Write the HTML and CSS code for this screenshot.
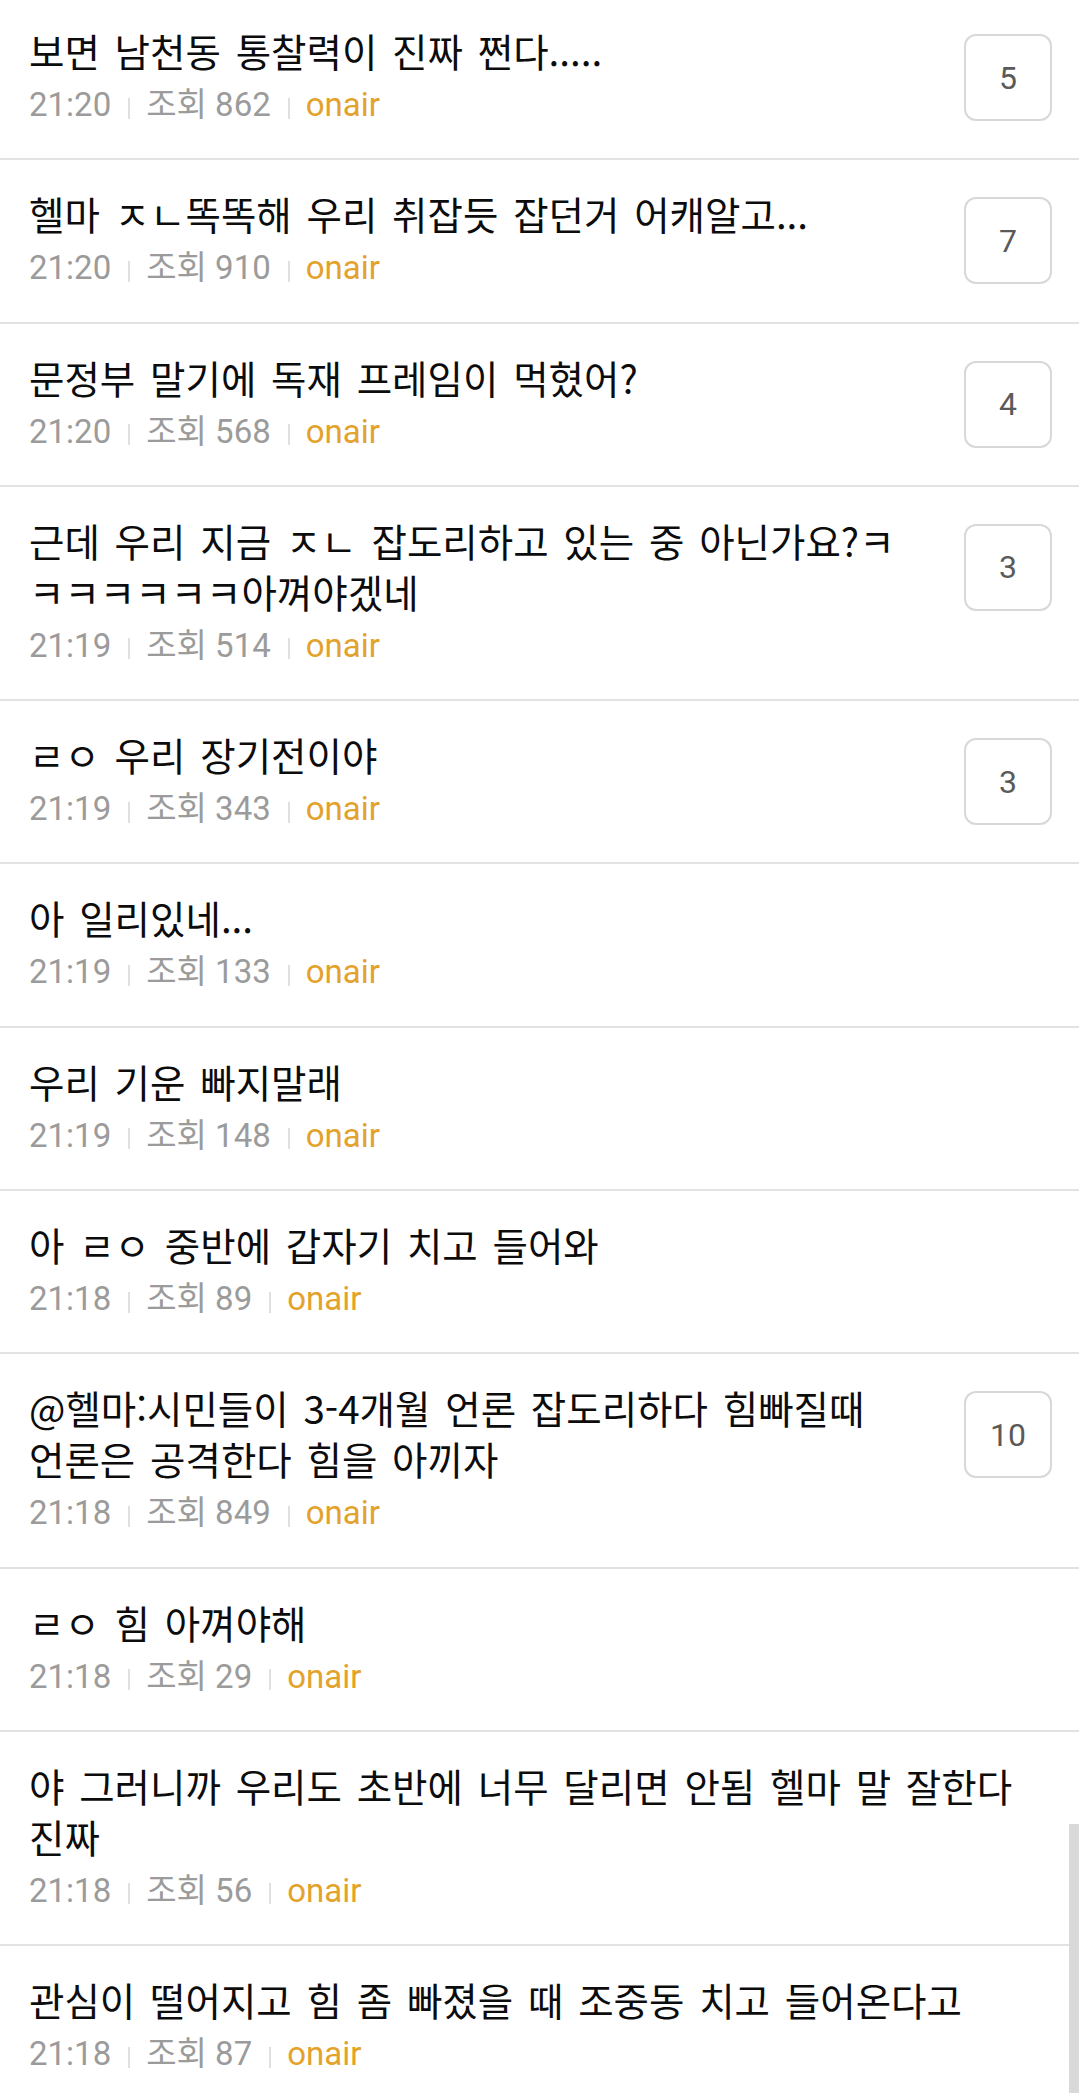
FILE: index.html
```html
<!DOCTYPE html>
<html lang="ko">
<head>
<meta charset="utf-8">
<title>onair</title>
<link rel="stylesheet" href="styles.css">
</head>
<body>
<ul class="list">
  <li class="row">
    <div class="main">
      <div class="title">보면 남천동 통찰력이 진짜 쩐다.....</div>
      <div class="meta"><span>21:20</span><i class="sep"></i><span>조회 862</span><i class="sep"></i><span class="board">onair</span></div>
    </div>
    <div class="badge">5</div>
  </li>
  <li class="row">
    <div class="main">
      <div class="title">헬마 ㅈㄴ똑똑해 우리 취잡듯 잡던거 어캐알고...</div>
      <div class="meta"><span>21:20</span><i class="sep"></i><span>조회 910</span><i class="sep"></i><span class="board">onair</span></div>
    </div>
    <div class="badge">7</div>
  </li>
  <li class="row">
    <div class="main">
      <div class="title">문정부 말기에 독재 프레임이 먹혔어?</div>
      <div class="meta"><span>21:20</span><i class="sep"></i><span>조회 568</span><i class="sep"></i><span class="board">onair</span></div>
    </div>
    <div class="badge">4</div>
  </li>
  <li class="row">
    <div class="main">
      <div class="title">근데 우리 지금 ㅈㄴ 잡도리하고 있는 중 아닌가요?ㅋㅋㅋㅋㅋㅋㅋ아껴야겠네</div>
      <div class="meta"><span>21:19</span><i class="sep"></i><span>조회 514</span><i class="sep"></i><span class="board">onair</span></div>
    </div>
    <div class="badge">3</div>
  </li>
  <li class="row">
    <div class="main">
      <div class="title">ㄹㅇ 우리 장기전이야</div>
      <div class="meta"><span>21:19</span><i class="sep"></i><span>조회 343</span><i class="sep"></i><span class="board">onair</span></div>
    </div>
    <div class="badge">3</div>
  </li>
  <li class="row">
    <div class="main">
      <div class="title">아 일리있네...</div>
      <div class="meta"><span>21:19</span><i class="sep"></i><span>조회 133</span><i class="sep"></i><span class="board">onair</span></div>
    </div>
  </li>
  <li class="row">
    <div class="main">
      <div class="title">우리 기운 빠지말래</div>
      <div class="meta"><span>21:19</span><i class="sep"></i><span>조회 148</span><i class="sep"></i><span class="board">onair</span></div>
    </div>
  </li>
  <li class="row">
    <div class="main">
      <div class="title">아 ㄹㅇ 중반에 갑자기 치고 들어와</div>
      <div class="meta"><span>21:18</span><i class="sep"></i><span>조회 89</span><i class="sep"></i><span class="board">onair</span></div>
    </div>
  </li>
  <li class="row">
    <div class="main">
      <div class="title">@헬마:시민들이 3-4개월 언론 잡도리하다 힘빠질때 언론은 공격한다 힘을 아끼자</div>
      <div class="meta"><span>21:18</span><i class="sep"></i><span>조회 849</span><i class="sep"></i><span class="board">onair</span></div>
    </div>
    <div class="badge">10</div>
  </li>
  <li class="row">
    <div class="main">
      <div class="title">ㄹㅇ 힘 아껴야해</div>
      <div class="meta"><span>21:18</span><i class="sep"></i><span>조회 29</span><i class="sep"></i><span class="board">onair</span></div>
    </div>
  </li>
  <li class="row">
    <div class="main">
      <div class="title">야 그러니까 우리도 초반에 너무 달리면 안됨 헬마 말 잘한다 진짜</div>
      <div class="meta"><span>21:18</span><i class="sep"></i><span>조회 56</span><i class="sep"></i><span class="board">onair</span></div>
    </div>
  </li>
  <li class="row">
    <div class="main">
      <div class="title">관심이 떨어지고 힘 좀 빠졌을 때 조중동 치고 들어온다고</div>
      <div class="meta"><span>21:18</span><i class="sep"></i><span>조회 87</span><i class="sep"></i><span class="board">onair</span></div>
    </div>
  </li>
</ul>
<div class="scroll-thumb"></div>
</body>
</html>
```
FILE: styles.css
```css
html, body {
  margin: 0;
  padding: 0;
  background: #ffffff;
}

body {
  font-family: "Noto Sans CJK KR", "Noto Sans", sans-serif;
  overflow: hidden;
}

.list {
  list-style: none;
  margin: -3px 0 0 0;
  padding: 0;
}

.row {
  display: flex;
  align-items: flex-start;
  padding: 28px 27px 33.3px 29px;
  border-bottom: 2px solid #e2e2e2;
}

.main {
  flex: 1;
  min-width: 0;
  padding-right: 10px;
}

.title {
  font-family: "Noto Sans CJK KR", sans-serif;
  font-size: 38.5px;
  font-weight: 400;
  line-height: 51px;
  color: #0c0c0c;
  word-spacing: 4px;
}

.meta {
  display: flex;
  align-items: center;
  margin-top: 9px;
  height: 40px;
  font-family: "Roboto", "Noto Sans CJK KR", sans-serif;
  font-size: 33px;
  line-height: 40px;
  color: #9b9b9b;
  white-space: nowrap;
}

.sep {
  display: inline-block;
  width: 2px;
  height: 21px;
  margin: 6px 16px 0 17px;
  background: #e0e0e0;
}

.board {
  color: #e3a22c;
}

.badge {
  flex: none;
  margin-top: 9px;
  margin-left: 42px;
  width: 84px;
  height: 83px;
  border: 2px solid #d8d8d8;
  border-radius: 12px;
  display: flex;
  align-items: center;
  justify-content: center;
  font-family: "Roboto", sans-serif;
  font-size: 32px;
  color: #5a5a5a;
}

.scroll-thumb {
  position: fixed;
  right: 0;
  top: 1824px;
  bottom: 0;
  width: 10px;
  background: #d9d9d9;
}
```
